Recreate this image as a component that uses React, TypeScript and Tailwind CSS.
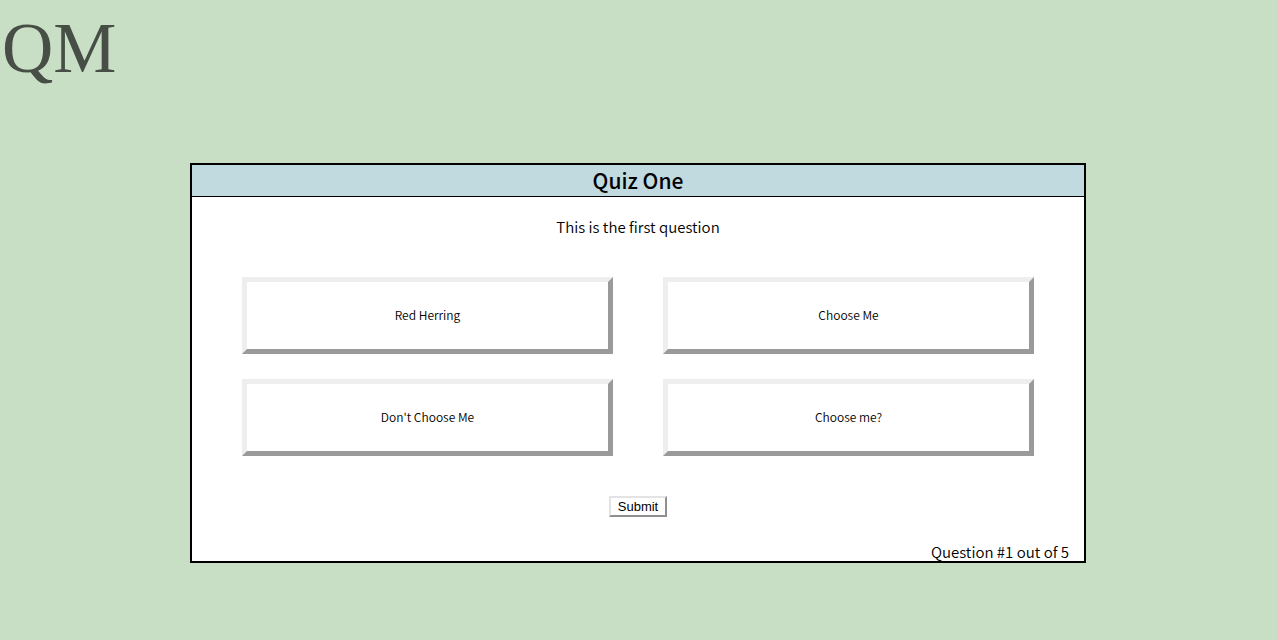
import { useState } from "react";

const answers = ["Red Herring", "Choose Me", "Don't Choose Me", "Choose me?"];

export default function App() {
  const [selected, setSelected] = useState<string | null>(null);

  return (
    <div className="min-h-screen bg-[#c8dfc5] font-['Noto_Sans_CJK_SC',sans-serif] font-[350] text-black">
      <header className="px-0.5 pt-2">
        <a href="#" className="inline-block font-['Liberation_Serif',serif] text-[71px] leading-20 text-[#464e45]">
          QM
        </a>
      </header>
      <main className="pt-[75px] pr-0.5">
        <section className="mx-auto w-full max-w-4xl border-2 border-black bg-white">
          <h1 className="border-b border-black bg-[#c1dae0] text-center text-[21px] leading-[31px] font-medium">
            Quiz One
          </h1>
          <form onSubmit={(e) => e.preventDefault()}>
            <p className="pt-5 text-center text-[15px] leading-5">This is the first question</p>
            <div className="grid grid-cols-2 gap-x-[50px] gap-y-[25px] px-[50px] pt-10">
              {answers.map((answer) => (
                <button
                  key={answer}
                  type="button"
                  aria-pressed={selected === answer}
                  onClick={() => setSelected(answer)}
                  className="h-[77px] border-5 border-t-[#eeeeee] border-r-[#9a9a9a] border-b-[#9a9a9a] border-l-[#eeeeee] bg-white pb-0.5 text-xs"
                >
                  {answer}
                </button>
              ))}
            </div>
            <div className="flex justify-center pt-10">
              <button
                type="submit"
                className="border-2 border-t-[#e3e3e3] border-r-[#8f8f8f] border-b-[#8f8f8f] border-l-[#e3e3e3] bg-white px-[7px] font-['Liberation_Sans',sans-serif] text-[13px] leading-[17px]"
              >
                Submit
              </button>
            </div>
          </form>
          <p className="pt-[25px] pr-[15px] text-right text-[15px] leading-[19px]">Question #1 out of 5</p>
        </section>
      </main>
    </div>
  );
}
